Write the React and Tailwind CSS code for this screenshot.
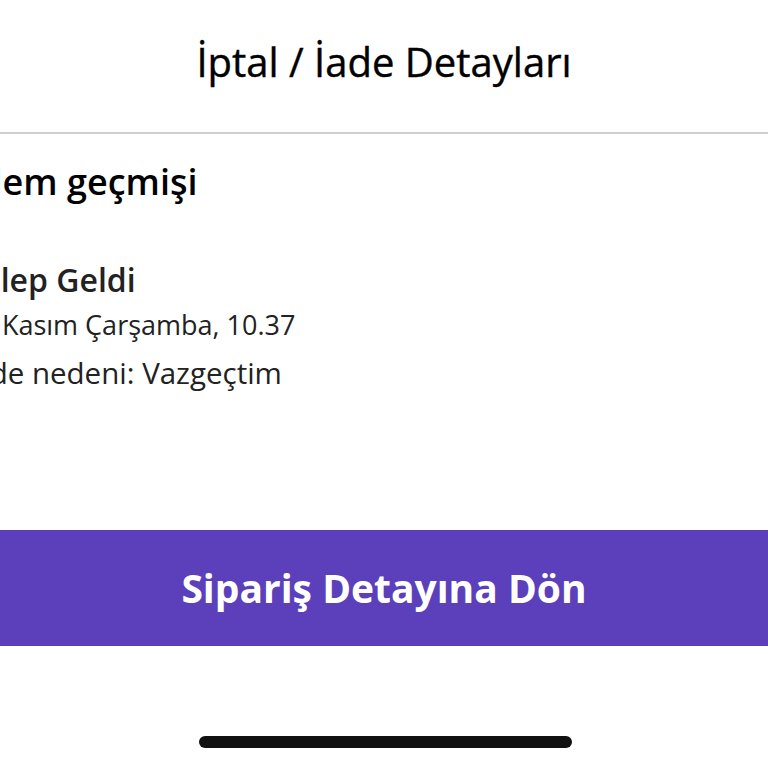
export default function App() {
  return (
    <div className="w-[768px] h-[768px] overflow-hidden bg-white flex flex-col" style={{ fontFamily: '"Open Sans", "Noto Sans", sans-serif' }}>
      <div className="h-[134px] flex items-center justify-center border-b-2 border-[#cfcfcf] shrink-0">
        <h1 className="text-[40px] font-normal text-black pb-[8px] [-webkit-text-stroke:0.4px_black]">İptal / İade Detayları</h1>
      </div>

      <div className="flex-1 ml-[-36px] pt-[22px]">
        <h2 className="text-[36px] font-semibold text-black leading-[52px]">İşlem geçmişi</h2>
        <div className="mt-[52px]">
          <p className="text-[32px] font-semibold text-[#222] leading-[40px]">Talep Geldi</p>
          <p className="text-[27px] text-[#222] leading-[40px] mt-[5px]">16 Kasım Çarşamba, 10.37</p>
          <p className="text-[29.5px] text-[#222] leading-[44px] mt-[6px] ml-[1px]">İade nedeni: Vazgeçtim</p>
        </div>
      </div>

      <button className="h-[116px] w-full bg-[#5b3fbb] text-white text-[39px] font-bold shrink-0 mb-[122px]">
        Sipariş Detayına Dön
      </button>

      <div className="absolute left-[199px] top-[736px] w-[373px] h-[12px] rounded-full bg-[#111]" />
    </div>
  )
}
